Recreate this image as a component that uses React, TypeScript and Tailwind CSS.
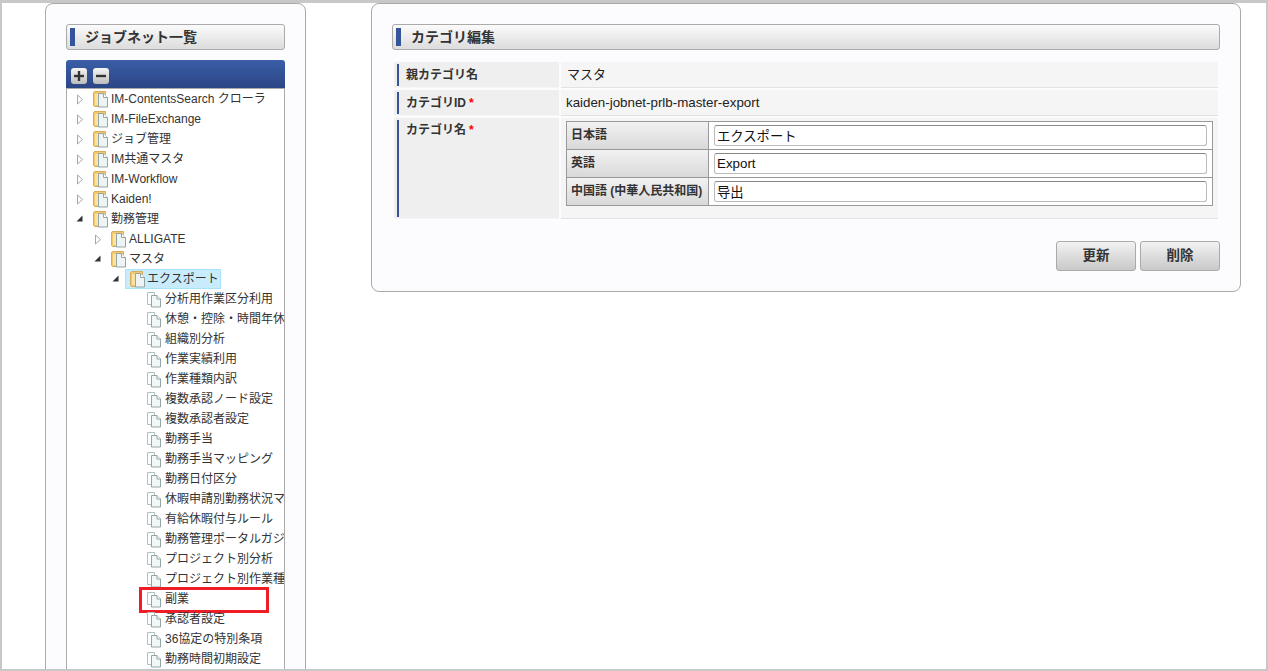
const FONT = '"Liberation Sans", "Noto Sans CJK JP", sans-serif'

type Node = { label: string; level: number; kind: 'folder' | 'file'; arrow?: 'closed' | 'open'; selected?: boolean; marked?: boolean }

const folder = (label: string, level: number, arrow: 'closed' | 'open', selected = false): Node => ({ label, level, kind: 'folder', arrow, selected })
const file = (label: string, marked = false): Node => ({ label, level: 3, kind: 'file', marked })

const nodes: Node[] = [
  folder('IM-ContentsSearch クローラ', 0, 'closed'),
  folder('IM-FileExchange', 0, 'closed'),
  folder('ジョブ管理', 0, 'closed'),
  folder('IM共通マスタ', 0, 'closed'),
  folder('IM-Workflow', 0, 'closed'),
  folder('Kaiden!', 0, 'closed'),
  folder('勤務管理', 0, 'open'),
  folder('ALLIGATE', 1, 'closed'),
  folder('マスタ', 1, 'open'),
  folder('エクスポート', 2, 'open', true),
  file('分析用作業区分利用'),
  file('休憩・控除・時間年休'),
  file('組織別分析'),
  file('作業実績利用'),
  file('作業種類内訳'),
  file('複数承認ノード設定'),
  file('複数承認者設定'),
  file('勤務手当'),
  file('勤務手当マッピング'),
  file('勤務日付区分'),
  file('休暇申請別勤務状況マ'),
  file('有給休暇付与ルール'),
  file('勤務管理ポータルガジ'),
  file('プロジェクト別分析'),
  file('プロジェクト別作業種'),
  file('副業', true),
  file('承認者設定'),
  file('36協定の特別条項'),
  file('勤務時間初期設定'),
]

function FileIcon() {
  return (
    <svg width="15" height="17" viewBox="0 0 15 17" className="shrink-0">
      <path d="M.5 1.500h7v12h-7z" fill="#fdfefe" stroke="#b0bebe" />
      <path d="M4.500 4.500h5.500l3.500 3.500v8h-9z" fill="#f1f6f6" stroke="#93a5a5" />
      <path d="M10 4.500V8h3.500" fill="#fff" stroke="#93a5a5" />
    </svg>
  )
}

function FolderIcon() {
  return (
    <svg width="15" height="17" viewBox="0 0 15 17" className="shrink-0">
      <path d="M.5 1.500l1-1h11v3h-6v12h-5l-1-1z" fill="#f5c76b" stroke="#d6ad5e" />
      <path d="M2 3h4v11H2z" fill="#fbe3a4" />
      <path d="M5.500 2.500h5l4 4v9.500h-9z" fill="#eef4f4" stroke="#93a5a5" />
      <path d="M10.500 2.500v4h4" fill="#fff" stroke="#93a5a5" />
    </svg>
  )
}

function Arrow({ type }: { type: 'closed' | 'open' }) {
  if (type === 'open') {
    return (
      <svg width="8" height="8" viewBox="0 0 8 8" className="shrink-0">
        <path d="M6.500.5v6h-6z" fill="#333" />
      </svg>
    )
  }
  return (
    <svg width="8" height="11" viewBox="0 0 8 11" className="shrink-0">
      <path d="M1.500 1l5 4.500-5 4.500z" fill="#fff" stroke="#a8a8a8" />
    </svg>
  )
}

function TreeRow({ node }: { node: Node }) {
  return (
    <div className="relative flex h-5 items-center whitespace-nowrap">
      {node.level === 0 && <div className="w-[9px] shrink-0" />}
      {node.level === 1 && <div className="w-[27px] shrink-0" />}
      {node.level === 2 && <div className="w-[45px] shrink-0" />}
      {node.level === 3 && <div className="w-[80px] shrink-0" />}
      {node.arrow && (
        <div className="flex w-[17px] shrink-0 items-center">
          <Arrow type={node.arrow} />
        </div>
      )}
      <div className={node.selected ? '-ml-[4px] flex h-5 items-center gap-[2px] border border-[#a8e2fb] bg-[#c9ecfc] pr-px pl-[4px]' : 'flex items-center gap-[3px]'}>
        {node.kind === 'folder' ? <FolderIcon /> : <FileIcon />}
        <span className="text-xs text-[#333]">{node.label}</span>
      </div>
      {node.marked && <div className="absolute top-[-2px] left-[72px] h-[26px] w-[130px] border-[3px] border-[#ee1c25]" />}
    </div>
  )
}

function PanelTitle({ children }: { children: string }) {
  return (
    <div className="flex h-[26px] items-center rounded-[3px] border border-[#aaa] bg-gradient-to-b from-[#fbfbfb] to-[#dcdcdc] pl-[3px]">
      <div className="h-[18px] w-[5px] bg-[#34559b]" />
      <h2 className="ml-[10px] text-sm font-bold text-[#333]">{children}</h2>
    </div>
  )
}

function TreeButton({ plus }: { plus?: boolean }) {
  return (
    <div className="flex h-4 w-4 items-center justify-center rounded-[3px] bg-gradient-to-b from-[#f6f6f6] to-[#bdbdbd]">
      <svg width="10" height="10" viewBox="0 0 10 10">
        <path d="M0 3.800h10v2.400H0z" fill="#333" />
        {plus && <path d="M3.800 0h2.400v10H3.800z" fill="#333" />}
      </svg>
    </div>
  )
}

function InfoRow({ label, required, height, labelTop, children }: { label: string; required?: boolean; height: string; labelTop: string; children: React.ReactNode }) {
  return (
    <div className={`flex gap-[2px] ${height}`}>
      <div className="w-[165px] shrink-0 border-b border-b-[#f6f6f6] bg-[#efefef] pt-[2px] pb-px pl-[3px]">
        <div className={`h-full border-l-[2px] border-l-[#34559b] pl-[7px] text-xs font-bold text-[#333] ${labelTop}`}>
          {label}
          {required && <span className="ml-[3px] text-[#f00]">*</span>}
        </div>
      </div>
      <div className="min-w-0 flex-1 border-b border-b-[#e2e2e2] bg-[#f5f5f5]">{children}</div>
    </div>
  )
}

function LangRow({ label, value, last }: { label: string; value: string; last?: boolean }) {
  return (
    <div className={last ? 'flex h-[27px]' : 'flex h-[28px] border-b border-b-[#999]'}>
      <div className="w-[142px] shrink-0 border-r border-r-[#999] bg-gradient-to-b from-[#f2f2f2] to-[#d9d9d9] pt-[5px] pl-[4px] text-xs font-bold text-[#333]">{label}</div>
      <div className="flex-1 bg-white pt-[3px] pr-[5px] pl-[5px]">
        <input readOnly defaultValue={value} className="block h-[21px] w-full rounded-[3px] border border-[#bbb] border-t-[#888] px-[2px] text-[13.33px] text-[#111] outline-none" />
      </div>
    </div>
  )
}

function ActionButton({ children }: { children: string }) {
  return (
    <button className="h-[30px] w-[80px] rounded-[3px] border border-[#aaa] bg-gradient-to-b from-[#f2f2f2] to-[#c9c9c9] text-[13.5px] font-bold text-[#333]">
      {children}
    </button>
  )
}

export default function App() {
  return (
    <div className="flex h-[671px] gap-[65px] overflow-hidden border-t-[3px] border-r-[2px] border-b-[2px] border-l-[2px] border-[#c8c8c8] bg-white pl-[43px]" style={{ fontFamily: FONT }}>
      <aside className="h-[700px] w-[261px] shrink-0 rounded-t-[8px] border border-[#aaa] bg-[#fcfcff] px-5 pt-5">
        <PanelTitle>ジョブネット一覧</PanelTitle>
        <div className="mt-[10px] flex h-[28px] items-start gap-[6px] rounded-t-[3px] bg-gradient-to-b from-[#3a5ea8] to-[#2b4685] pt-[8px] pl-[5px]">
          <TreeButton plus />
          <TreeButton />
        </div>
        <div className="h-[600px] overflow-hidden border border-[#aaa] bg-white">
          {nodes.map((n) => <TreeRow key={n.label} node={n} />)}
        </div>
      </aside>

      <main className="h-[289px] w-[870px] shrink-0 rounded-[8px] border border-[#aaa] bg-[#fcfcff] px-5 pt-5">
        <PanelTitle>カテゴリ編集</PanelTitle>
        <div className="mt-3 ml-[2px] flex w-[824px] flex-col gap-[2px]">
          <InfoRow label="親カテゴリ名" height="h-[26px]" labelTop="pt-[3px]">
            <div className="pt-[3px] pl-[6px] text-[13px] text-[#222]">マスタ</div>
          </InfoRow>
          <InfoRow label="カテゴリID" required height="h-[26px]" labelTop="pt-[3px]">
            <div className="pt-[3px] pl-[5px] text-[13.33px] text-[#222]">kaiden-jobnet-prlb-master-export</div>
          </InfoRow>
          <InfoRow label="カテゴリ名" required height="h-[101px]" labelTop="pt-[2px]">
            <div className="mx-[5px] mt-[3px] border border-[#999]">
              <LangRow label="日本語" value="エクスポート" />
              <LangRow label="英語" value="Export" />
              <LangRow label="中国語 (中華人民共和国)" value="导出" last />
            </div>
          </InfoRow>
        </div>
        <div className="mt-[22px] flex justify-end gap-1">
          <ActionButton>更新</ActionButton>
          <ActionButton>削除</ActionButton>
        </div>
      </main>
    </div>
  )
}
